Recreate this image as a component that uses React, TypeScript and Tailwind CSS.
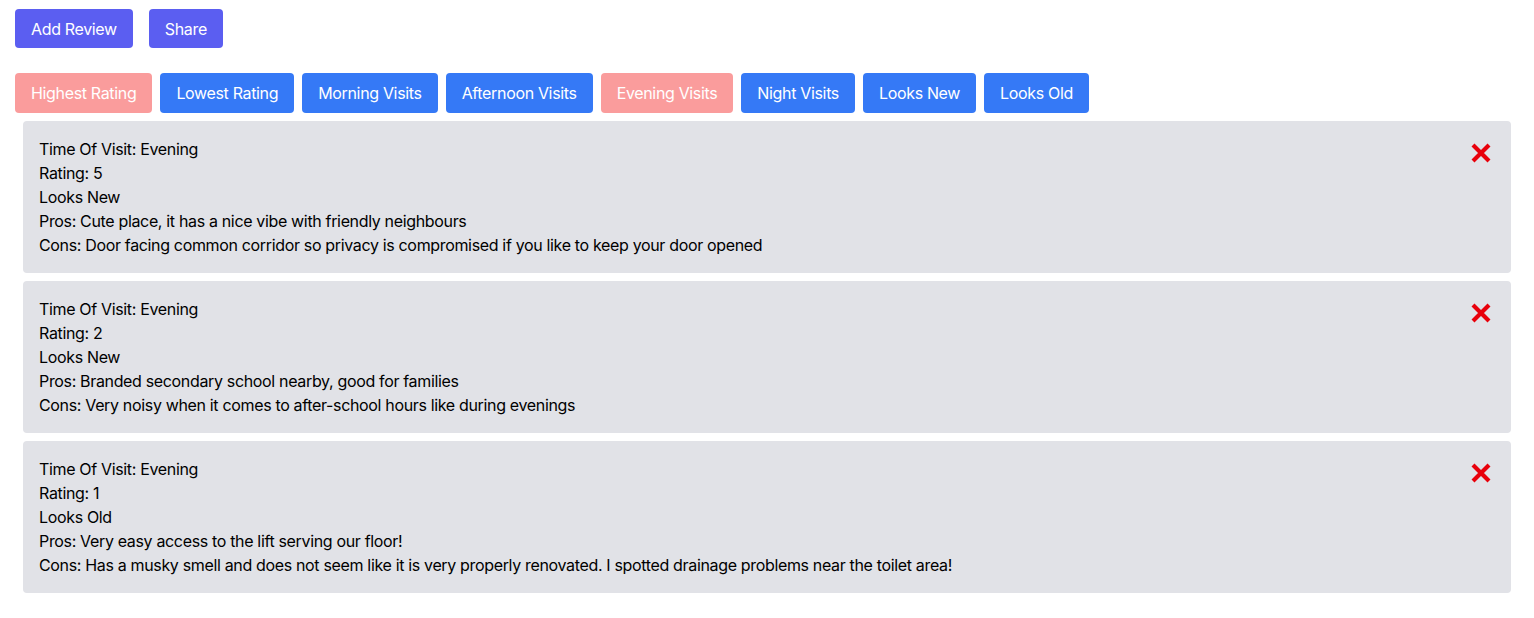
import React from "react";

const reviews = [
  {
    time: "Evening",
    rating: 5,
    looks: "Looks New",
    pros: "Cute place, it has a nice vibe with friendly neighbours",
    cons: "Door facing common corridor so privacy is compromised if you like to keep your door opened",
  },
  {
    time: "Evening",
    rating: 2,
    looks: "Looks New",
    pros: "Branded secondary school nearby, good for families",
    cons: "Very noisy when it comes to after-school hours like during evenings",
  },
  {
    time: "Evening",
    rating: 1,
    looks: "Looks Old",
    pros: "Very easy access to the lift serving our floor!",
    cons: "Has a musky smell and does not seem like it is very properly renovated. I spotted drainage problems near the toilet area!",
  },
];

const filters: { label: string; active: boolean }[] = [
  { label: "Highest Rating", active: true },
  { label: "Lowest Rating", active: false },
  { label: "Morning Visits", active: false },
  { label: "Afternoon Visits", active: false },
  { label: "Evening Visits", active: true },
  { label: "Night Visits", active: false },
  { label: "Looks New", active: false },
  { label: "Looks Old", active: false },
];

function XMark() {
  return (
    <svg width="22" height="22" viewBox="0 0 22 22" aria-hidden="true">
      <path d="M3 3 L19 19 M19 3 L3 19" stroke="#e8000b" strokeWidth="4.2" strokeLinecap="butt" />
    </svg>
  );
}

export default function App() {
  return (
    <div
      className="min-h-screen bg-white text-black tracking-[-0.34px]"
      style={{ fontFamily: "Inter, 'Noto Sans', 'Liberation Sans', sans-serif" }}
    >
      <div className="px-[15px] pt-[9px]">
        <div className="flex gap-4">
          <button className="h-[39px] px-4 rounded bg-[#5b5ef1] text-white text-base">Add Review</button>
          <button className="h-[39px] px-4 rounded bg-[#5b5ef1] text-white text-base">Share</button>
        </div>
        <div className="flex gap-2 mt-[25px]">
          {filters.map((f) => (
            <button
              key={f.label}
              className={
                "h-10 px-4 rounded text-white text-base " +
                (f.active ? "bg-[#fa9c9c]" : "bg-[#3579f6]")
              }
            >
              {f.label}
            </button>
          ))}
        </div>
        <div className="flex flex-col gap-[8px] mt-2 mx-2">
          {reviews.map((r, i) => (
            <div key={i} className="relative bg-[#e1e2e7] rounded p-4 text-base leading-6">
              <div>Time Of Visit: {r.time}</div>
              <div>Rating: {r.rating}</div>
              <div>{r.looks}</div>
              <div>Pros: {r.pros}</div>
              <div>Cons: {r.cons}</div>
              <button className="absolute right-[19px] top-[21px]">
                <XMark />
              </button>
            </div>
          ))}
        </div>
      </div>
    </div>
  );
}
